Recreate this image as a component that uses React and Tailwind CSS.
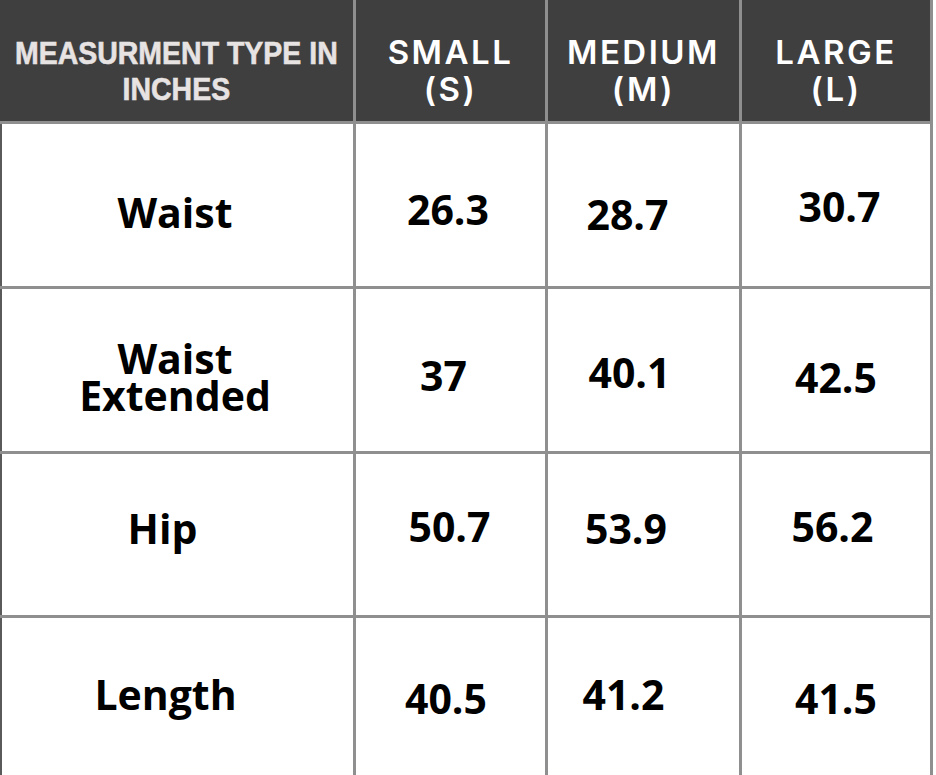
const sizes = [
  { name: 'SMALL', code: '(S)' },
  { name: 'MEDIUM', code: '(M)' },
  { name: 'LARGE', code: '(L)' },
];

// each cell carries its own small nudge, the scan isn't perfectly centred
const rows = [
  {
    label: ['Waist'],
    labelPad: 'pt-[14px] pr-[5px]',
    values: [
      { v: '26.3', pad: 'pt-[8px] pr-[5px]' },
      { v: '28.7', pad: 'pt-[18px] pr-[32px]' },
      { v: '30.7', pad: 'pt-[3px] pl-[7px]' },
    ],
  },
  {
    label: ['Waist', 'Extended'],
    labelPad: 'pt-[14px] pr-[5px]',
    values: [
      { v: '37', pad: 'pt-[10px] pr-[14px]' },
      { v: '40.1', pad: 'pt-[4px] pr-[28px]' },
      { v: '42.5', pad: 'pt-[15px]' },
    ],
  },
  {
    label: ['Hip'],
    labelPad: 'pb-[13px] pr-[30px]',
    values: [
      { v: '50.7', pad: 'pb-[17px] pr-[2px]' },
      { v: '53.9', pad: 'pb-[12px] pr-[35px]' },
      { v: '56.2', pad: 'pb-[17px] pr-[7px]' },
    ],
  },
  {
    label: ['Length'],
    labelPad: 'pb-[5px] pr-[24px]',
    values: [
      { v: '40.5', pad: 'pt-[3px] pr-[9px]' },
      { v: '41.2', pad: 'pb-[5px] pr-[40px]' },
      { v: '41.5', pad: 'pt-[3px]' },
    ],
  },
];

const bodyFont = "font-['Open_Sans',sans-serif] font-bold text-[41px] text-black";

export default function App() {
  return (
    <div className="w-[936px] h-[775px] bg-white overflow-hidden">
      <div className="w-[933px] h-[775px] grid grid-cols-[353px_189px_191px_188px] grid-rows-[121px_162px_162px_161px_157px] gap-[3px] bg-[#8f8f8f] pr-[3px]">
        {/* header */}
        <div className="bg-[#3f3f3f] flex items-center justify-center pt-[20px] overflow-hidden">
          <div className="text-center whitespace-nowrap scale-x-[0.89] font-['Liberation_Sans',Arial,sans-serif] font-bold text-[32px] leading-[36px] text-[#e7e3e3] [-webkit-text-stroke:0.6px_#e7e3e3]">
            <div>MEASURMENT TYPE IN</div>
            <div>INCHES</div>
          </div>
        </div>
        {sizes.map((s) => (
          <div key={s.code} className="bg-[#3f3f3f] flex items-center justify-center pt-[20px]">
            <div className="text-center font-['Inter',sans-serif] font-semibold text-[33px] leading-[37px] tracking-[2.5px] text-white">
              <div>{s.name}</div>
              <div>{s.code}</div>
            </div>
          </div>
        ))}

        {/* body */}
        {rows.map((r) => (
          <div key={r.label.join(' ')} className="contents">
            <div className={`bg-white border-l-2 border-[#5a5a5a] flex items-center justify-center ${r.labelPad}`}>
              <div className={`${bodyFont} text-center leading-[37px]`}>
                {r.label.map((l) => (
                  <div key={l}>{l}</div>
                ))}
              </div>
            </div>
            {r.values.map((c, i) => (
              <div key={i} className={`bg-white flex items-center justify-center ${c.pad}`}>
                <span className={`${bodyFont} leading-none`}>{c.v}</span>
              </div>
            ))}
          </div>
        ))}
      </div>
    </div>
  );
}
